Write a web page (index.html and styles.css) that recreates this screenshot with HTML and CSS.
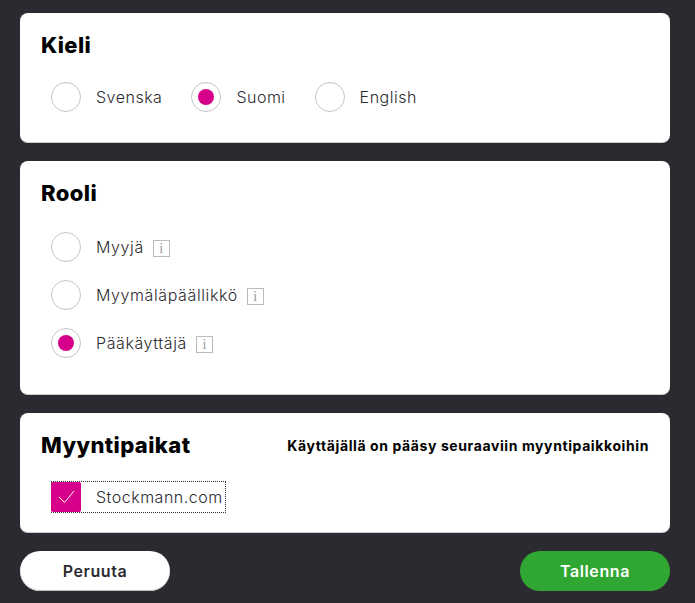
FILE: index.html
```html
<!DOCTYPE html>
<html lang="fi">

<head>
  <title>Käyttäjä</title>
  <meta charset="utf-8">
  <link rel="stylesheet" href="styles.css">
</head>

<body>

  <div class="card card-lang">
    <h2 class="card-title">Kieli</h2>
    <div class="radio-row">
      <div class="option"><span class="radio"></span><span class="label">Svenska</span></div>
      <div class="option"><span class="radio checked"></span><span class="label">Suomi</span></div>
      <div class="option"><span class="radio"></span><span class="label">English</span></div>
    </div>
  </div>

  <div class="card card-role">
    <h2 class="card-title">Rooli</h2>
    <div class="radio-col">
      <div class="option"><span class="radio"></span><span class="label">Myyjä</span><span class="info">i</span></div>
      <div class="option"><span class="radio"></span><span class="label">Myymäläpäällikkö</span><span class="info">i</span></div>
      <div class="option"><span class="radio checked"></span><span class="label">Pääkäyttäjä</span><span class="info">i</span></div>
    </div>
  </div>

  <div class="card card-shops">
    <div class="shops-head">
      <h2 class="card-title">Myyntipaikat</h2>
      <div class="shops-note">Käyttäjällä on pääsy seuraaviin myyntipaikkoihin</div>
    </div>
    <div class="check-row">
      <span class="check">
        <svg width="17" height="14" viewBox="0 0 17 14"><path d="M1 7l5.500 5.500L16 1" fill="none" stroke="#fff" stroke-width="1"/></svg>
      </span>
      <span class="label">Stockmann.com</span>
    </div>
  </div>

  <div class="buttons">
    <button class="btn btn-cancel">Peruuta</button>
    <button class="btn btn-save">Tallenna</button>
  </div>

</body>

</html>
```

FILE: styles.css
```css
* {
  box-sizing: border-box;
}

body {
  margin: 0;
  padding: 13px 25px 12px 20px;
  background-color: #2b2a30;
  font-family: "Inter", "Liberation Sans", sans-serif;
  color: #2b2a30;
}

.card {
  background: #fff;
  border-radius: 8px;
  border-bottom: 1px solid #ccc;
  padding: 17px 21px 0 21px;
  margin-bottom: 18px;
}

.card-lang {
  height: 130px;
}

.card-role {
  height: 234px;
}

.card-shops {
  height: 120px;
}

.card-title {
  margin: 0;
  font-size: 22px;
  line-height: 30px;
  font-weight: 800;
  letter-spacing: 0.4px;
  color: #000;
}

.radio-row {
  display: flex;
  margin-top: 22px;
  padding-left: 10px;
}

.radio-row .option {
  margin-right: 29px;
}

.radio-col {
  display: flex;
  flex-direction: column;
  gap: 18px;
  margin-top: 24px;
  padding-left: 10px;
}

.radio-col .label {
  letter-spacing: 0.6px;
}

.option {
  display: flex;
  align-items: center;
  height: 30px;
}

.radio {
  width: 30px;
  height: 30px;
  border: 1px solid #c4c4c4;
  border-radius: 50%;
  margin-right: 15px;
  display: flex;
  align-items: center;
  justify-content: center;
}

.radio.checked::after {
  content: "";
  width: 16px;
  height: 16px;
  border-radius: 50%;
  background: #d6008a;
}

.label {
  font-size: 16px;
  font-weight: 300;
  letter-spacing: 0.5px;
  line-height: 30px;
  white-space: nowrap;
}

.info {
  width: 17px;
  height: 17px;
  margin-left: 9px;
  margin-top: 3px;
  border: 1px solid #bbb;
  font-family: "Liberation Serif", serif;
  font-size: 14px;
  line-height: 15px;
  text-align: center;
  color: #999;
}

.shops-head {
  display: flex;
  justify-content: space-between;
  align-items: center;
}

.shops-note {
  font-size: 14px;
  font-weight: 700;
  letter-spacing: 0.6px;
  color: #000;
}

.check-row {
  display: flex;
  align-items: center;
  width: 175px;
  height: 32px;
  margin-top: 21px;
  margin-left: 10px;
  border: 1px dotted #333;
}

.check {
  width: 30px;
  height: 30px;
  margin-left: -1px;
  margin-right: 15px;
  border-radius: 2px;
  background: #d6008a;
  display: flex;
  align-items: center;
  justify-content: center;
}

.buttons {
  display: flex;
  justify-content: space-between;
}

.btn {
  width: 150px;
  height: 40px;
  border: 0;
  border-radius: 20px;
  font-family: inherit;
  font-size: 16px;
  font-weight: 600;
  letter-spacing: 0.6px;
}

.btn-cancel {
  background: #fff;
  color: #2b2a30;
  box-shadow: inset 0 -1px 0 #bbb;
}

.btn-save {
  background: #2fa732;
  color: #fff;
}
```
